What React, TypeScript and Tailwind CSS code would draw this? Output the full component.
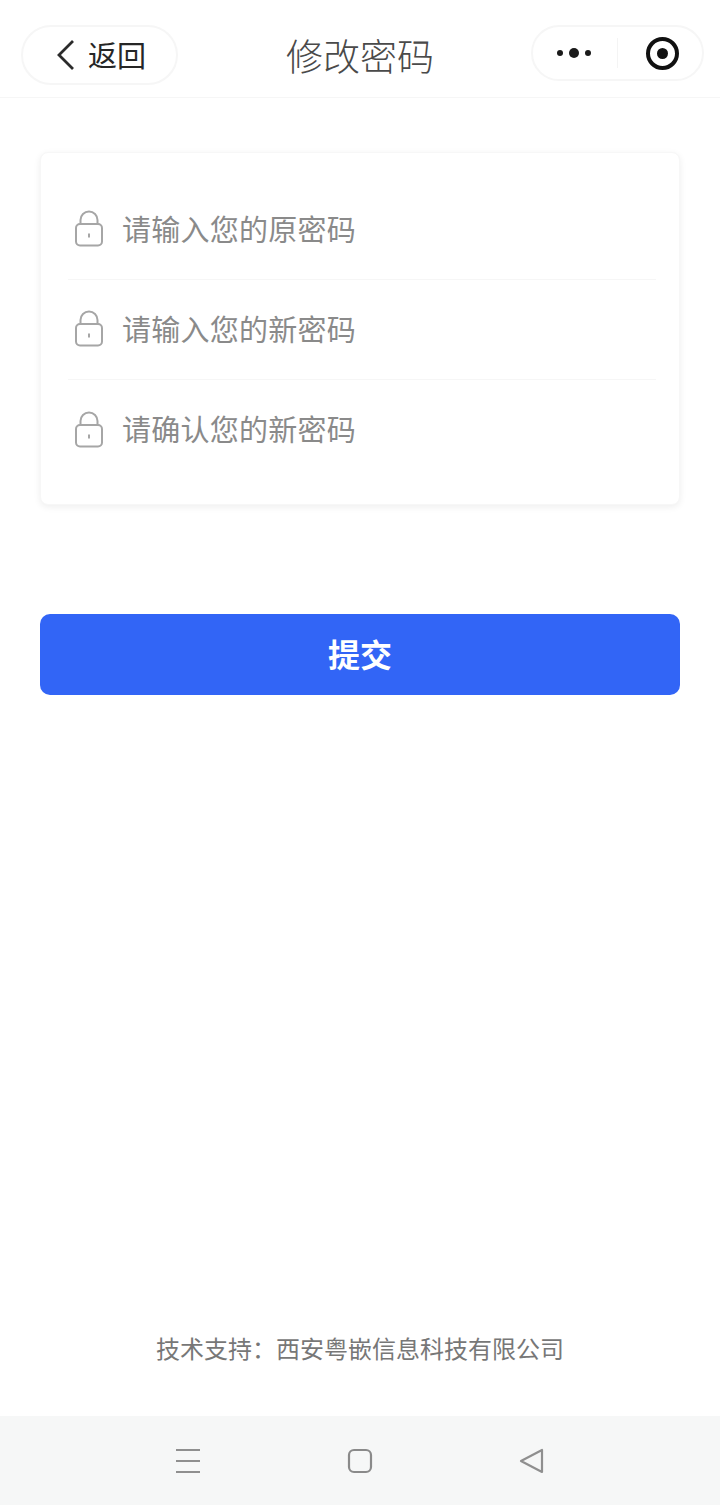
const cjk = "font-['Noto_Sans_CJK_SC','Noto_Sans',sans-serif]"

function LockIcon() {
  return (
    <svg width="30" height="37" viewBox="0 0 30 37" fill="none" stroke="#a6a6a6" strokeWidth="2">
      <path d="M6.500 15V10a8.500 8.500 0 0 1 17 0V15" />
      <rect x="2" y="14" width="26" height="21.500" rx="4" />
      <path d="M15 23.500v4" strokeWidth="2" />
    </svg>
  )
}

const fields = ['请输入您的原密码', '请输入您的新密码', '请确认您的新密码']

export default function App() {
  return (
    <div className={`${cjk} w-[720px] h-[1505px] bg-white flex flex-col`}>
      {/* Mini program title bar */}
      <header className="h-[98px] shrink-0 border-b border-[#f6f6f6] grid grid-cols-[1fr_auto_1fr] items-start pt-[25px] px-4">
        <div className="ml-[5px] w-[157px] h-[60px] rounded-full border-2 border-[#f6f6f6] flex items-center pl-[32px] gap-[11px] text-[#262626]">
          <svg width="22" height="32" viewBox="0 0 22 32" fill="none" stroke="#2b2b2b" strokeWidth="2.800">
            <path d="M18 2 4 16l14 14" />
          </svg>
          <span className="text-[29px] leading-none -mt-[2px]">返回</span>
        </div>
        <h1 className="text-[37px] font-light leading-none text-[#4a4a4a] mt-[12px]">修改密码</h1>
        <div className="justify-self-end w-[173px] h-[56px] rounded-full border-2 border-[#f6f6f6] flex items-center">
          <div className="w-[84px] flex items-center justify-center gap-[6px] pr-[2px]">
            <span className="w-[6px] h-[6px] rounded-full bg-[#1a1a1a]" />
            <span className="w-[10px] h-[10px] rounded-full bg-[#1a1a1a]" />
            <span className="w-[6px] h-[6px] rounded-full bg-[#1a1a1a]" />
          </div>
          <div className="w-px h-[30px] bg-[#f4f4f4]" />
          <div className="flex-1 flex items-center justify-center pl-[4px]">
            <div className="w-[33px] h-[33px] rounded-full border-[4px] border-[#111111] flex items-center justify-center">
              <span className="w-[11px] h-[11px] rounded-full bg-[#111111]" />
            </div>
          </div>
        </div>
      </header>

      <main className="flex-1 flex flex-col px-10">
        {/* Password form */}
        <section className="mt-[54px] h-[353px] bg-white rounded-lg border border-[#f7f7f7] shadow-[0_2px_7px_rgba(0,0,0,0.07)] pl-[27px] pr-[23px] py-[27px]">
          {fields.map((label, i) => (
            <div key={label} className={`h-[100px] flex items-center pl-[6px] gap-[18px] ${i < 2 ? 'border-b border-[#f6f6f6]' : ''}`}>
              <span className="-mt-[2px] flex">
                <LockIcon />
              </span>
              <span className="text-[29px] leading-none tracking-[0.25px] text-[#8a8a8a] -mt-[3px]">{label}</span>
            </div>
          ))}
        </section>

        <button className="mt-[109px] h-[81px] rounded-[10px] bg-[#3265f6] text-white text-[32px] font-semibold leading-none pb-[4px]">
          提交
        </button>

        <p className="mt-auto mb-[56px] text-center text-[24px] leading-none text-[#777777]">技术支持：西安粤嵌信息科技有限公司</p>
      </main>

      {/* Android navigation bar */}
      <nav className="h-[89px] shrink-0 bg-[#f6f7f7] flex items-start justify-center gap-[144px] pt-[31px]">
        <svg width="28" height="28" viewBox="0 0 28 28" fill="none" stroke="#8f8f8f" strokeWidth="2">
          <path d="M2 3h24M2 14h24M2 25h24" />
        </svg>
        <svg width="28" height="28" viewBox="0 0 28 28" fill="none" stroke="#8a8a8a" strokeWidth="2.200">
          <rect x="3" y="3" width="22" height="22" rx="5" />
        </svg>
        <svg width="28" height="28" viewBox="0 0 28 28" fill="none" stroke="#8f8f8f" strokeWidth="2.200" strokeLinejoin="round">
          <path d="M3 14 24 3v22z" />
        </svg>
      </nav>
    </div>
  )
}
